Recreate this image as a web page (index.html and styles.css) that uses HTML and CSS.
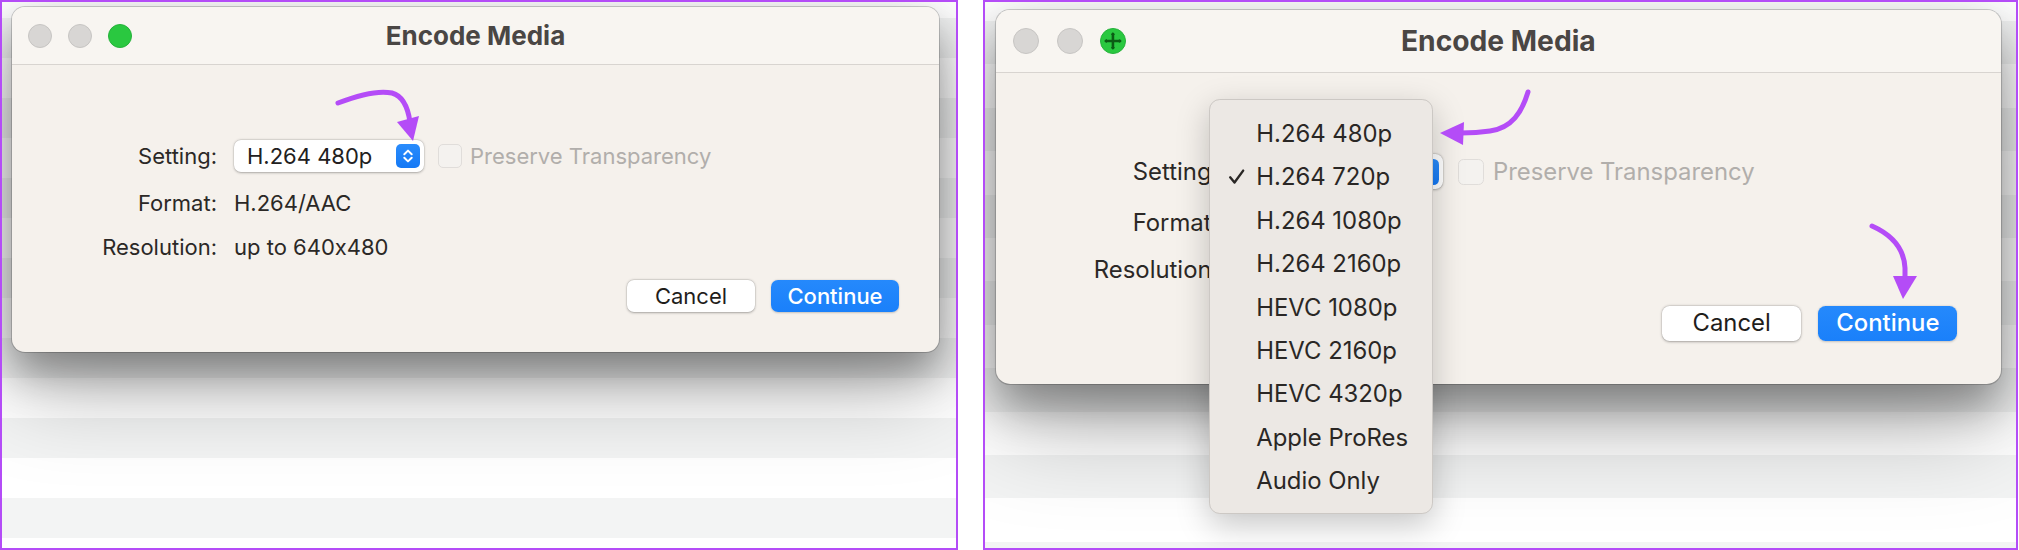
FILE: index.html
```html
<!DOCTYPE html>
<html lang="en">
<head>
<meta charset="utf-8">
<title>Encode Media</title>
<link rel="stylesheet" href="styles.css">
</head>
<body>
<div class="stage">
  <section class="panel panel-left">
    <div class="window">
      <header class="titlebar">
        <div class="lights">
          <span class="light"></span>
          <span class="light"></span>
          <span class="light light-green"></span>
        </div>
        <h1 class="title">Encode Media</h1>
        <span></span>
      </header>
      <div class="content">
        <div class="form">
          <span class="label">Setting:</span>
          <div class="setting-row">
            <div class="popup">
              <span class="popup-text">H.264 480p</span>
              <span class="stepper">
                <svg viewBox="0 0 24 24" width="24" height="24"><path d="M8.3 10.2 L12 6.6 L15.7 10.2 M8.3 13.8 L12 17.4 L15.7 13.8" fill="none" stroke="#fff" stroke-width="2" stroke-linecap="round" stroke-linejoin="round"/></svg>
              </span>
            </div>
            <div class="transp">
              <span class="checkbox"></span>
              <span class="check-label">Preserve Transparency</span>
            </div>
          </div>
          <span class="label">Format:</span>
          <span class="value">H.264/AAC</span>
          <span class="label">Resolution:</span>
          <span class="value">up to 640x480</span>
        </div>
        <div class="actions">
          <button class="btn">Cancel</button>
          <button class="btn btn-primary">Continue</button>
        </div>
      </div>
    </div>
    <svg class="annot" viewBox="2 2 954 546" width="954" height="546">
      <path d="M338 103 C 356 96 378 90 392 93 C 403 96 408 108 410 122" fill="none" stroke="#b44cf7" stroke-width="5" stroke-linecap="round"/>
      <polygon points="397,122 419,116 413,141" fill="#b44cf7"/>
    </svg>
  </section>

  <section class="panel panel-right">
    <div class="window">
      <header class="titlebar">
        <div class="lights">
          <span class="light"></span>
          <span class="light"></span>
          <span class="light light-green">
            <svg viewBox="0 0 24 24" width="22" height="22"><path d="M12 4 V20 M4 12 H20" fill="none" stroke="#0b5c14" stroke-width="2.6"/><path d="M12 3 L10 6 H14 Z M12 21 L10 18 H14 Z M3 12 L6 10 V14 Z M21 12 L18 10 V14 Z" fill="#0b5c14"/></svg>
          </span>
        </div>
        <h1 class="title">Encode Media</h1>
        <span></span>
      </header>
      <div class="content">
        <div class="form">
          <span class="label">Setting:</span>
          <div class="setting-row">
            <div class="popup">
              <span class="popup-text">H.264 720p</span>
              <span class="stepper">
                <svg viewBox="0 0 24 24" width="24" height="24"><path d="M8.3 10.2 L12 6.6 L15.7 10.2 M8.3 13.8 L12 17.4 L15.7 13.8" fill="none" stroke="#fff" stroke-width="2" stroke-linecap="round" stroke-linejoin="round"/></svg>
              </span>
            </div>
            <div class="transp">
              <span class="checkbox"></span>
              <span class="check-label">Preserve Transparency</span>
            </div>
          </div>
          <span class="label">Format:</span>
          <span class="value">H.264/AAC</span>
          <span class="label">Resolution:</span>
          <span class="value">up to 1280x720</span>
        </div>
        <div class="actions">
          <button class="btn">Cancel</button>
          <button class="btn btn-primary">Continue</button>
        </div>
      </div>
      <ul class="menu">
        <li class="item"><span class="mark"></span>H.264 480p</li>
        <li class="item"><span class="mark"><svg viewBox="0 0 16 16" width="16" height="16"><path d="M2 8.6 L6 13.4 L14 2.4" fill="none" stroke="#2a2725" stroke-width="2.2" stroke-linecap="round" stroke-linejoin="round"/></svg></span>H.264 720p</li>
        <li class="item"><span class="mark"></span>H.264 1080p</li>
        <li class="item"><span class="mark"></span>H.264 2160p</li>
        <li class="item"><span class="mark"></span>HEVC 1080p</li>
        <li class="item"><span class="mark"></span>HEVC 2160p</li>
        <li class="item"><span class="mark"></span>HEVC 4320p</li>
        <li class="item"><span class="mark"></span>Apple ProRes</li>
        <li class="item"><span class="mark"></span>Audio Only</li>
      </ul>
    </div>
    <svg class="annot" viewBox="985 2 1031 546" width="1031" height="546">
      <path d="M1528 92 C 1522 112 1512 128 1490 131 C 1480 132.5 1472 133 1461 133" fill="none" stroke="#b44cf7" stroke-width="5" stroke-linecap="round"/>
      <polygon points="1440,133 1464,122 1463,145" fill="#b44cf7"/>
      <path d="M1872 226 C 1890 234 1904 247 1905 268 L1905 279" fill="none" stroke="#b44cf7" stroke-width="5" stroke-linecap="round"/>
      <polygon points="1893,276 1917,276 1903,299" fill="#b44cf7"/>
    </svg>
  </section>
</div>
</body>
</html>
```

FILE: styles.css
```css
* {
  box-sizing: border-box;
  margin: 0;
  padding: 0;
}

html,
body {
  background: #ffffff;
}

body {
  width: 2019px;
  height: 550px;
  overflow: hidden;
  font-family: Inter, "Noto Sans", sans-serif;
  font-feature-settings: "calt" 0;
  color: #272422;
}

.stage {
  display: flex;
  gap: 25px;
  height: 550px;
}

.panel {
  position: relative;
  flex: none;
  height: 550px;
  border: 2px solid #b44cf7;
  overflow: hidden;
}

.panel-left {
  width: 958px;
  padding: 5px 0 0 10px;
  background: repeating-linear-gradient(to bottom, #ffffff 0 16px, #f3f4f4 16px 56px, #ffffff 56px 80px);
}

.panel-right {
  width: 1035px;
  padding: 8px 0 0 11px;
  background: repeating-linear-gradient(to bottom, #ffffff 0 19px, #f3f4f4 19px 62.4px, #ffffff 62.4px 86.8px);
}

.window {
  position: relative;
  display: flex;
  flex-direction: column;
  width: 927px;
  height: 345px;
  background: #f5f1ec;
  border-radius: 13px;
  box-shadow: 0 0 0 1px rgba(0, 0, 0, 0.18), 0 20px 40px rgba(0, 0, 0, 0.34), 0 40px 90px rgba(0, 0, 0, 0.26);
}

.panel-right .window {
  zoom: 1.085;
  width: 926px;
}

.titlebar {
  display: grid;
  grid-template-columns: 1fr auto 1fr;
  align-items: center;
  height: 58px;
  background: #f8f5f1;
  border-bottom: 1px solid #d8d4d0;
  border-radius: 13px 13px 0 0;
}

.lights {
  display: flex;
  gap: 16px;
  padding-left: 16px;
}

.light {
  display: flex;
  align-items: center;
  justify-content: center;
  width: 24px;
  height: 24px;
  border-radius: 50%;
  background: #d8d6d4;
  border: 1px solid #c7c5c3;
}

.light-green {
  background: #2ac840;
  border-color: #25b23a;
}

.title {
  font-size: 26px;
  font-weight: 700;
  color: #4a4644;
  line-height: 30px;
}

.content {
  padding: 75px 40px 0 0;
}

.form {
  display: grid;
  grid-template-columns: 205px auto;
  column-gap: 17px;
  row-gap: 18px;
  align-items: center;
  font-size: 22px;
  line-height: 26px;
}

.label {
  text-align: right;
  color: #2b2826;
  white-space: nowrap;
}

.value {
  color: #2b2826;
  white-space: nowrap;
}

.setting-row {
  display: flex;
  align-items: center;
  gap: 14px;
}

.popup {
  display: flex;
  align-items: center;
  justify-content: space-between;
  width: 190px;
  height: 32px;
  padding: 0 4px 0 13px;
  background: #ffffff;
  border-radius: 7px;
  box-shadow: 0 0.5px 2.5px rgba(0, 0, 0, 0.28), 0 0 0 0.5px rgba(0, 0, 0, 0.08);
}

.popup-text {
  color: #222020;
}

.stepper {
  display: flex;
  width: 24px;
  height: 24px;
  border-radius: 5px;
  background: linear-gradient(#2a8cfc, #1579f5);
}

.transp {
  display: flex;
  align-items: center;
  gap: 8px;
}

.checkbox {
  width: 24px;
  height: 24px;
  border-radius: 5px;
  background: #f4f2ef;
  border: 1px solid #e0ddda;
}

.check-label {
  color: #b1aeab;
  white-space: nowrap;
}

.actions {
  display: flex;
  justify-content: flex-end;
  gap: 16px;
  margin-top: 20px;
}

.btn {
  width: 128px;
  height: 32px;
  border: none;
  border-radius: 7px;
  font-family: inherit;
  font-feature-settings: "calt" 0;
  font-size: 22px;
  line-height: 32px;
  background: #ffffff;
  color: #1f1d1b;
  box-shadow: 0 0.5px 2.5px rgba(0, 0, 0, 0.3), 0 0 0 0.5px rgba(0, 0, 0, 0.08);
}

.btn-primary {
  background: linear-gradient(#2589fc, #1a80fa);
  color: #ffffff;
  font-weight: 500;
  box-shadow: 0 0.5px 2px rgba(0, 0, 0, 0.2);
}

.menu {
  position: absolute;
  left: 196px;
  top: 82px;
  width: 207px;
  padding: 11px 0 10px;
  list-style: none;
  background: #ece8e4;
  border: 1px solid #ccc8c4;
  border-radius: 10px;
  box-shadow: 0 10px 30px rgba(0, 0, 0, 0.22);
}

.item {
  display: flex;
  align-items: center;
  height: 40px;
  padding-left: 17px;
  font-size: 22px;
  color: #2a2725;
  white-space: nowrap;
}

.mark {
  display: flex;
  align-items: center;
  width: 26px;
  flex: none;
}

.annot {
  position: absolute;
  left: 0;
  top: 0;
  pointer-events: none;
}
```
